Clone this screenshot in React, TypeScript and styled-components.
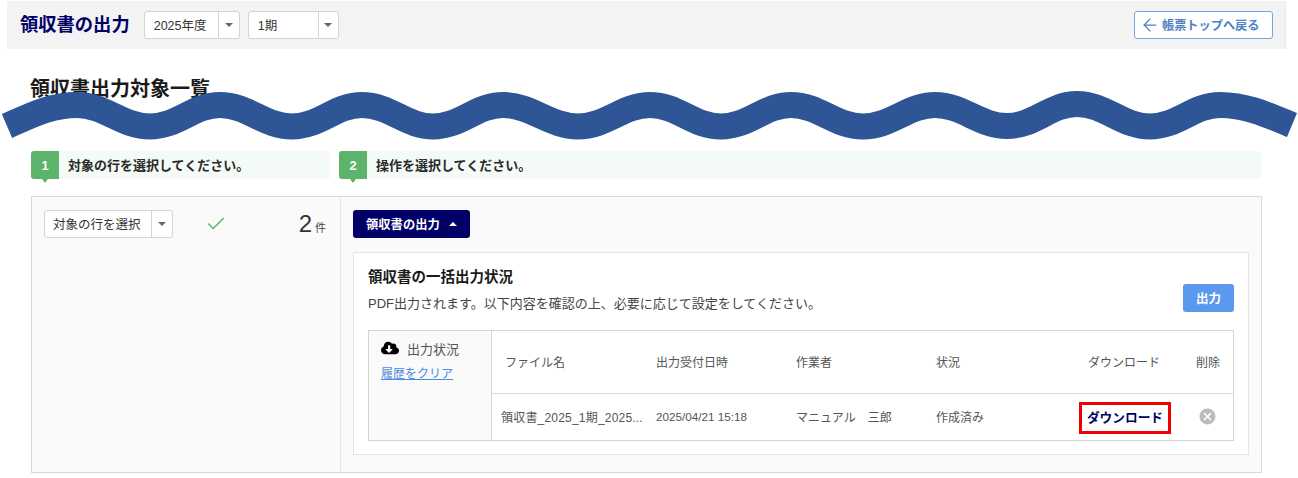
import React from "react";
import styled, { createGlobalStyle } from "styled-components";
import { ArrowLeft, Check } from "lucide-react";
import { FaCloudDownloadAlt } from "react-icons/fa";
import { MdCancel } from "react-icons/md";

const Global = createGlobalStyle`
  html, body { margin: 0; padding: 0; background: #fff; }
  body { font-family: "Liberation Sans", "Noto Sans CJK JP", sans-serif; color: #222; overflow: hidden; }
  * { box-sizing: border-box; }
`;

const Page = styled.div`
  position: relative;
  width: 1298px;
  height: 478px;
  padding-top: 1px;
  overflow: hidden;
`;

const Header = styled.header`
  display: flex;
  align-items: center;
  height: 48px;
  width: 1279px;
  margin-left: 7px;
  padding: 0 12px 0 13px;
  background: #f3f3f3;
  border-right: 1px solid #e9e9e9;
`;

const Title = styled.h1`
  margin: 0 14px 0 0;
  font-size: 18.3px;
  line-height: 22px;
  font-weight: 700;
  color: #000066;
`;

const SelectBox = styled.div<{ $width: number; $gap?: number }>`
  display: flex;
  align-items: stretch;
  flex: none;
  width: ${(p) => p.$width}px;
  height: 28px;
  margin-right: ${(p) => p.$gap ?? 8}px;
  background: #fff;
  border: 1px solid #d4d4d4;
  border-radius: 3px;
  font-size: 12.5px;
  color: #333;
`;

const SelectLabel = styled.span<{ $pad: number }>`
  flex: 1;
  display: flex;
  align-items: center;
  padding: 0 0 2px ${(p) => p.$pad}px;
  white-space: nowrap;
`;

const SelectArrow = styled.span<{ $width: number }>`
  display: flex;
  align-items: center;
  justify-content: center;
  width: ${(p) => p.$width}px;
  border-left: 1px solid #d4d4d4;
  &::after {
    content: "";
    border-left: 4px solid transparent;
    border-right: 4px solid transparent;
    border-top: 4px solid #666;
  }
`;

const BackButton = styled.button`
  display: flex;
  align-items: center;
  gap: 2px;
  margin-left: auto;
  width: 139px;
  height: 28px;
  padding: 0 0 1px 5px;
  background: #fff;
  border: 1px solid #78a3e2;
  border-radius: 3px;
  font: 700 12.2px "Liberation Sans", "Noto Sans CJK JP", sans-serif;
  color: #4f7fc4;
  white-space: nowrap;
`;

const Content = styled.main`
  width: 1262px;
  padding-left: 30px;
`;

const Heading = styled.h2`
  margin: 28px 0 0;
  height: 74px;
  font-size: 20px;
  line-height: 24px;
  font-weight: 700;
  color: #1a1a1a;
`;

const Steps = styled.div`
  display: grid;
  grid-template-columns: 299px 923px;
  gap: 9px;
  margin-left: 1px;
`;

const Step = styled.div`
  display: flex;
  align-items: center;
  gap: 9px;
  height: 28px;
  background: #f4faf5;
  border-radius: 3px;
  font-size: 13px;
  font-weight: 700;
  color: #2a2a2a;
`;

const StepText = styled.span`
  padding-bottom: 2px;
`;

const StepBadge = styled.span`
  position: relative;
  display: flex;
  align-items: center;
  justify-content: center;
  width: 28px;
  height: 28px;
  background: #5bb46a;
  border-radius: 3px 0 0 3px;
  color: #fff;
  font-size: 13px;
  &::after {
    content: "";
    position: absolute;
    left: 11px;
    bottom: -4px;
    border-left: 3px solid transparent;
    border-right: 3px solid transparent;
    border-top: 4px solid #5bb46a;
  }
`;

const Panel = styled.section`
  display: grid;
  grid-template-columns: 309px 1fr;
  width: 1231px;
  height: 277px;
  margin: 17px 0 0 1px;
  background: #fafafa;
  border: 1px solid #d8d8d8;
`;

const LeftCol = styled.div`
  display: flex;
  align-items: flex-start;
  padding: 13px 14px 0 12px;
  border-right: 1px solid #e6e6e6;
`;

const CheckMark = styled.span`
  display: flex;
  margin: 3px 0 0 23px;
  color: #5bb46a;
`;

const Count = styled.span`
  margin-left: auto;
  display: flex;
  align-items: baseline;
  gap: 3px;
  font-size: 11px;
  color: #444;
  line-height: 28px;
  b {
    font-size: 24px;
    font-weight: 400;
    color: #333;
  }
`;

const RightCol = styled.div`
  padding: 13px 12px 0 12px;
`;

const OutputButton = styled.button`
  display: flex;
  align-items: center;
  gap: 9px;
  width: 117px;
  height: 28px;
  padding: 0 0 1px 13px;
  background: #000066;
  border: none;
  border-radius: 3px;
  color: #fff;
  font: 700 12.3px "Liberation Sans", "Noto Sans CJK JP", sans-serif;
  &::after {
    content: "";
    border-left: 4px solid transparent;
    border-right: 4px solid transparent;
    border-bottom: 4px solid #fff;
  }
`;

const Card = styled.div`
  width: 896px;
  height: 203px;
  margin-top: 14px;
  padding: 14px 14px 0;
  background: #fff;
  border: 1px solid #e4e4e4;
`;

const CardTop = styled.div`
  display: flex;
  justify-content: space-between;
  height: 63px;
`;

const CardTitle = styled.div`
  font-size: 14.5px;
  line-height: 20px;
  font-weight: 700;
  color: #1a1a1a;
`;

const CardText = styled.div`
  margin-top: 7px;
  font-size: 13px;
  line-height: 20px;
  color: #444;
`;

const PrimaryButton = styled.button`
  width: 51px;
  height: 28px;
  margin-top: 17px;
  padding: 0 0 2px;
  background: #5a99ee;
  border: none;
  border-radius: 3px;
  color: #fff;
  font: 700 12.5px "Liberation Sans", "Noto Sans CJK JP", sans-serif;
`;

const StatusTable = styled.div`
  display: grid;
  grid-template-columns: 123px 1fr;
  height: 111px;
  border: 1px solid #d4d4d4;
  font-size: 12px;
  color: #555;
`;

const StatusSide = styled.div`
  padding: 8px 0 0 12px;
  background: #fafafa;
  border-right: 1px solid #d4d4d4;
`;

const SideLabel = styled.div`
  display: flex;
  align-items: center;
  gap: 8px;
  height: 18px;
  font-size: 13px;
  color: #555;
  svg { color: #000; }
`;

const ClearLink = styled.a`
  display: block;
  margin-top: 7px;
  color: #4a8ae0;
  text-decoration: underline;
`;

const Rows = styled.div`
  display: grid;
  grid-template-rows: 63px 1fr;
`;

const Row = styled.div<{ $head?: boolean }>`
  display: grid;
  grid-template-columns: 164px 140px 140px 152px 108px 38px;
  align-items: center;
  padding-bottom: 2px;
  border-bottom: ${(p) => (p.$head ? "1px solid #d9d9d9" : "none")};
`;

const Cell = styled.div<{ $pad?: number; $small?: boolean }>`
  padding-left: ${(p) => p.$pad ?? 0}px;
  font-size: ${(p) => (p.$small ? 11.7 : 12)}px;
  white-space: nowrap;
`;

const FileCell = styled(Cell)`
  letter-spacing: 0.2px;
`;

const ActionCell = styled.div`
  display: flex;
  align-items: center;
`;

const DownloadBox = styled.a`
  display: flex;
  align-items: center;
  justify-content: center;
  width: 92px;
  height: 32px;
  margin: 3px 0 0 -9px;
  padding-bottom: 2px;
  border: 3px solid #f00000;
  font-size: 12.7px;
  font-weight: 700;
  color: #000066;
  white-space: nowrap;
`;

const DeleteIcon = styled.span`
  display: flex;
  color: #bcbcbc;
  margin-left: 2px;
`;

const Wave = styled.svg`
  position: absolute;
  left: 0;
  top: 0;
  pointer-events: none;
`;

const wavePath =
  "M7 126 C30 116 50 105 77 105 C105 105 122 126.5 150 126.5 C178 126.5 193 105 220 105 C248 105 264 126.5 292 126.5 C320 126.5 335 105 362 105 C390 105 406 126.5 433 126.5 C461 126.5 476 105 503 105 C531 105 550 126.5 578 126.5 C606 126.5 623 105 650 105 C678 105 693 126.5 721 126.5 C749 126.5 764 105 791 105 C819 105 835 126.5 863 126.5 C891 126.5 908 105 935 105 C963 105 979 126 1007 126 C1035 126 1050 104 1077 104 C1105 104 1122 126.5 1150 126.5 C1178 126.5 1193 105 1220 105 C1246 105 1268 115 1292 125";

export default function App() {
  return (
    <Page>
      <Global />
      <Header>
        <Title>領収書の出力</Title>
        <SelectBox $width={96}>
          <SelectLabel $pad={9}>2025年度</SelectLabel>
          <SelectArrow $width={21} />
        </SelectBox>
        <SelectBox $width={91}>
          <SelectLabel $pad={9}>1期</SelectLabel>
          <SelectArrow $width={20} />
        </SelectBox>
        <BackButton>
          <ArrowLeft size={20} strokeWidth={1.5} />
          帳票トップへ戻る
        </BackButton>
      </Header>
      <Content>
        <Heading>領収書出力対象一覧</Heading>
        <Steps>
          <Step>
            <StepBadge>1</StepBadge>
            <StepText>対象の行を選択してください。</StepText>
          </Step>
          <Step>
            <StepBadge>2</StepBadge>
            <StepText>操作を選択してください。</StepText>
          </Step>
        </Steps>
        <Panel>
          <LeftCol>
            <SelectBox $width={129} $gap={9}>
              <SelectLabel $pad={8}>対象の行を選択</SelectLabel>
              <SelectArrow $width={21} />
            </SelectBox>
            <CheckMark>
              <Check size={22} strokeWidth={1.6} />
            </CheckMark>
            <Count>
              <b>2</b>件
            </Count>
          </LeftCol>
          <RightCol>
            <OutputButton>領収書の出力</OutputButton>
            <Card>
              <CardTop>
                <div>
                  <CardTitle>領収書の一括出力状況</CardTitle>
                  <CardText>PDF出力されます。以下内容を確認の上、必要に応じて設定をしてください。</CardText>
                </div>
                <PrimaryButton>出力</PrimaryButton>
              </CardTop>
              <StatusTable>
                <StatusSide>
                  <SideLabel>
                    <FaCloudDownloadAlt size={18} />
                    出力状況
                  </SideLabel>
                  <ClearLink>履歴をクリア</ClearLink>
                </StatusSide>
                <Rows>
                  <Row $head>
                    <Cell $pad={13}>ファイル名</Cell>
                    <Cell>出力受付日時</Cell>
                    <Cell>作業者</Cell>
                    <Cell>状況</Cell>
                    <Cell>ダウンロード</Cell>
                    <Cell>削除</Cell>
                  </Row>
                  <Row>
                    <FileCell $pad={9}>領収書_2025_1期_2025...</FileCell>
                    <Cell $small>2025/04/21 15:18</Cell>
                    <Cell>マニュアル　三郎</Cell>
                    <Cell>作成済み</Cell>
                    <ActionCell>
                      <DownloadBox>ダウンロード</DownloadBox>
                    </ActionCell>
                    <ActionCell>
                      <DeleteIcon>
                        <MdCancel size={19} />
                      </DeleteIcon>
                    </ActionCell>
                  </Row>
                </Rows>
              </StatusTable>
            </Card>
          </RightCol>
        </Panel>
      </Content>
      <Wave width="1298" height="478" viewBox="0 0 1298 478">
        <path d={wavePath} fill="none" stroke="#2e5596" strokeWidth="26" />
      </Wave>
    </Page>
  );
}
